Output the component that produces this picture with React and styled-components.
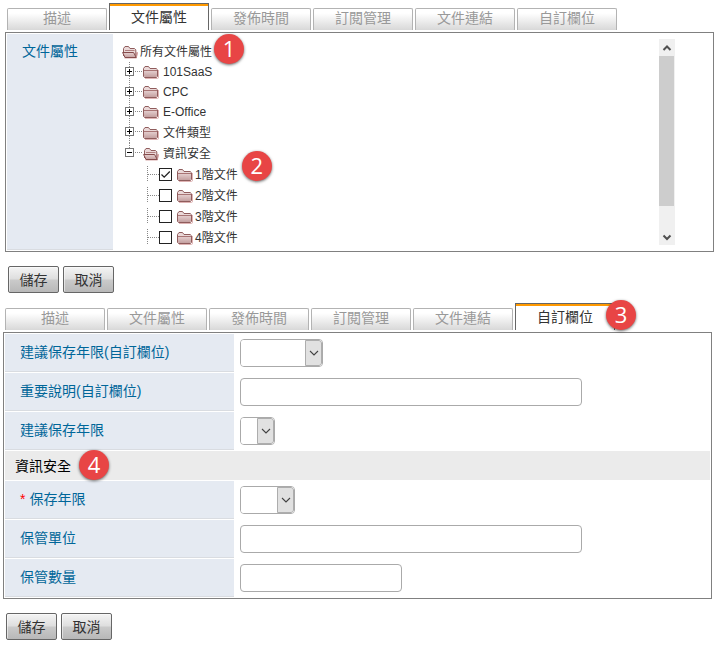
import React from "react";
import styled, { createGlobalStyle, css } from "styled-components";

const GlobalStyle = createGlobalStyle`
  *, *::before, *::after { box-sizing: border-box; }
  body {
    margin: 0;
    background: #fff;
    color: #333;
    font-family: "Liberation Sans", "Noto Sans CJK TC", sans-serif;
    font-size: 14px;
    line-height: 20px;
  }
  button, input, select { font: inherit; color: inherit; }
`;

const Page = styled.main`
  padding: 3px 4px 16px 3px;
`;

const Section = styled.section`
  margin: ${(p) => (p.$inset ? "0 0 10px 2px" : "0 2px 0 0")};
`;

const TabBar = styled.div`
  display: flex;
  align-items: flex-end;
  gap: 2px;
  padding: 0 2px 2px;
`;

const TabButton = styled.button`
  width: 100px;
  height: 22px;
  padding: 0 0 2px;
  border: 1px solid #b3b3b3;
  border-bottom: 0;
  border-radius: 2px 2px 0 0;
  background: linear-gradient(#fff 20%, #d8d8d8);
  color: #999;
  line-height: 19px;
  ${(p) =>
    p.$active &&
    css`
      height: 27px;
      padding: 0;
      border-color: #666;
      border-radius: 0;
      background: #fff;
      box-shadow: inset 0 2px #f90;
      color: #333;
    `}
`;

const TabWrap = styled.div`
  position: relative;
`;

const Panel = styled.div`
  display: grid;
  grid-template-columns: ${(p) => p.$label}px 1fr;
  gap: 1px;
  padding: 1px;
  border: 1px solid #808080;
`;

const LabelCell = styled.div`
  display: flex;
  align-items: ${(p) => (p.$top ? "flex-start" : "center")};
  gap: 4px;
  padding: ${(p) => (p.$top ? "7px 15px" : "0 15px 2px")};
  border-bottom: 1px solid #d9dce1;
  background: #e5eaf2;
  color: #069;
`;

const Required = styled.span`
  color: #f00;
`;

const FieldCell = styled.div`
  display: flex;
  align-items: center;
  height: 38px;
  padding: 0 5px;
`;

const GroupHeading = styled.h2`
  grid-column: 1 / -1;
  display: flex;
  align-items: center;
  position: relative;
  height: 29px;
  margin: 0;
  padding: 0 10px;
  background: #ebebeb;
  color: #000;
  font-size: 14px;
  font-weight: 400;
`;

const TextInput = styled.input`
  width: ${(p) => p.$width}px;
  height: 28px;
  padding: 0 6px;
  border: 1px solid #aaa;
  border-radius: 4px;
  background: #fff;
`;

const SelectFrame = styled.div`
  display: grid;
  grid-template-columns: 1fr 17px;
  width: ${(p) => p.$width}px;
  height: 28px;
  overflow: hidden;
  border: 1px solid #aaa;
  border-radius: 4px;
`;

const SelectControl = styled.select`
  grid-area: 1 / 1 / 2 / 3;
  width: 100%;
  padding: 0 20px 0 4px;
  border: 0;
  appearance: none;
  background: #fff;
`;

const SelectArrow = styled.span`
  grid-area: 1 / 2 / 2 / 3;
  display: grid;
  place-items: center;
  border: 1px solid #adadad;
  border-radius: 0 3px 3px 0;
  background: #e1e1e1;
  pointer-events: none;
`;

const Actions = styled.div`
  display: flex;
  gap: 4px;
  padding: 14px 3px 0;
`;

const ActionButton = styled.button`
  width: 51px;
  height: 27px;
  padding: 0;
  border: 1px solid #666;
  border-radius: 2px;
  background: linear-gradient(#f4f4f4, #dedede 48%, #cacaca 52%, #b8b8b8);
  box-shadow: inset 1px 1px #fff8;
  color: #333;
`;

const TreeCell = styled.div`
  display: flex;
  justify-content: space-between;
  padding: 5px 37px 2px 8px;
`;

const Tree = styled.ul`
  margin: 0;
  padding: 3px 0 0;
  list-style: none;
  font-size: 12px;
`;

const Branch = styled.ul`
  margin: 0;
  padding: 0 0 0 ${(p) => p.$indent}px;
  list-style: none;
`;

const TreeRow = styled.div`
  display: flex;
  align-items: center;
  position: relative;
  height: ${(p) => (p.$tall ? 21 : 20)}px;
  width: max-content;
`;

const RowName = styled.label`
  margin-left: ${(p) => p.$gap}px;
  white-space: nowrap;
`;

const Toggle = styled.button`
  display: flex;
  height: 100%;
  padding: 0;
  border: 0;
  background: none;
`;

const CheckBox = styled.input`
  appearance: none;
  flex: none;
  width: 13px;
  height: 13px;
  margin: 0 5px 0 0;
  border: 1px solid #222;
  background: #fff;
`;

const CheckHolder = styled.span`
  display: grid;
  & > * { grid-area: 1 / 1; }
  & > svg { pointer-events: none; }
`;

const Badge = styled.span`
  position: absolute;
  ${(p) => p.$place}
  z-index: 1;
  display: grid;
  place-items: center;
  width: 30px;
  height: 30px;
  padding-bottom: 2px;
  border-radius: 50%;
  background: #e84545;
  box-shadow: 0 1px 3px #0009;
  color: #fff;
  font-family: "Open Sans", "Noto Sans", sans-serif;
  font-size: 22px;
  line-height: 28px;
`;

const ScrollTrack = styled.div`
  display: flex;
  flex-direction: column;
  align-items: center;
  width: 16px;
  height: 206px;
  background: #f0f0f0;
`;

const ScrollButton = styled.button`
  display: grid;
  place-items: center;
  width: 16px;
  height: 17px;
  padding: 0;
  border: 0;
  background: none;
`;

const ScrollThumb = styled.div`
  align-self: flex-start;
  width: 15px;
  height: 150px;
  margin-bottom: auto;
  background: #cdcdcd;
`;

function Chevron({ up, thick }) {
  return (
    <svg width="10" height="8" viewBox="0 0 10 8" aria-hidden="true">
      <path
        d={up ? "M1.5 6L5 2.5L8.5 6" : thick ? "M1.5 2.5L5 6L8.5 2.5" : "M1 2L5 6L9 2"}
        fill="none"
        stroke={thick ? "#505050" : "#444"}
        strokeWidth={thick ? 2 : 1.1}
      />
    </svg>
  );
}

function Folder({ open }) {
  return (
    <svg width="16" height="16" viewBox="0 0 16 16" aria-hidden="true">
      <defs>
        <linearGradient id="folderFill" x1="0" y1="0" x2="0" y2="1">
          <stop offset="0" stopColor="#e6d0d0" />
          <stop offset="1" stopColor="#c4a0a0" />
        </linearGradient>
      </defs>
      {open ? (
        <>
          <path d="M2.5 13.5H13.8L15.5 8" fill="none" stroke="#d8a8a8" strokeWidth="2" />
          <path d="M1.5 12V4.5L3 2.5H6.5L8 4.5H12.5L13.8 5.8V12.5" fill="#ead8d8" stroke="#8f5c5c" />
          <path d="M3 6.5H12.5" stroke="#b08080" />
          <path d="M0.6 8.5H11.6L14.2 13.5H3Z" fill="url(#folderFill)" stroke="#864c4c" strokeLinejoin="round" />
        </>
      ) : (
        <>
          <path d="M2 14.5H14.5Q15.5 14.5 15.5 13V6" fill="none" stroke="#dfb4b4" />
          <path d="M0.5 12.5V4.5L2 2.5H5.5L7 4.5H13.2L14.5 5.8V12.5L13.5 13.5H1.5Z" fill="#ead8d8" stroke="#8f5c5c" strokeLinejoin="round" />
          <path d="M1 6.5H14V12.3L13.2 13H1.8L1 12.3Z" fill="url(#folderFill)" />
          <path d="M1 6.5H14" stroke="#a87474" />
        </>
      )}
    </svg>
  );
}

function Expander({ open, height }) {
  return (
    <svg width="18" height={height} viewBox={`0 0 18 ${height}`} aria-hidden="true">
      <path d={`M4.5 0V${open ? 5 : height}`} stroke="#888" strokeDasharray="1 1" />
      <path d="M10 9.5H17" stroke="#888" strokeDasharray="1 1" />
      <rect x="0.5" y="5.5" width="8" height="8" fill="#fff" stroke="#777" />
      <path d={open ? "M2 9.5H7" : "M2 9.5H7M4.5 7V12"} stroke="#000" />
    </svg>
  );
}

function LeafLines() {
  return (
    <svg width="12" height="21" viewBox="0 0 12 21" aria-hidden="true">
      <path d="M0.5 2V18" stroke="#888" strokeDasharray="1 1" />
      <path d="M1 10.5H12" stroke="#888" strokeDasharray="1 1" />
    </svg>
  );
}

const TAB_NAMES = ["描述", "文件屬性", "發佈時間", "訂閱管理", "文件連結", "自訂欄位"];

function Tabs({ active, badge }) {
  return (
    <TabBar role="tablist">
      {TAB_NAMES.map((name) => (
        <TabWrap key={name} role="presentation">
          <TabButton type="button" role="tab" aria-selected={name === active} $active={name === active}>
            {name}
          </TabButton>
          {name === active && badge}
        </TabWrap>
      ))}
    </TabBar>
  );
}

function SelectField({ id, width }) {
  return (
    <SelectFrame $width={width}>
      <SelectControl id={id} defaultValue="">
        <option value="" />
      </SelectControl>
      <SelectArrow>
        <Chevron />
      </SelectArrow>
    </SelectFrame>
  );
}

function Field({ id, label, required, select, width }) {
  return (
    <>
      <LabelCell>
        {required && <Required>*</Required>}
        <label htmlFor={id}>{label}</label>
      </LabelCell>
      <FieldCell>
        {select ? <SelectField id={id} width={width} /> : <TextInput id={id} type="text" $width={width} />}
      </FieldCell>
    </>
  );
}

function SaveCancel() {
  return (
    <Actions>
      <ActionButton type="button">儲存</ActionButton>
      <ActionButton type="button">取消</ActionButton>
    </Actions>
  );
}

const GROUPS = [
  { name: "101SaaS" },
  { name: "CPC" },
  { name: "E-Office" },
  { name: "文件類型", tall: true },
  { name: "資訊安全", tall: true, open: true },
];

const LEVELS = ["1階文件", "2階文件", "3階文件", "4階文件"];

function Leaf({ name, index }) {
  const [checked, setChecked] = React.useState(index === 0);
  const id = `level-${index}`;
  return (
    <li>
      <TreeRow $tall>
        <LeafLines />
        <CheckHolder>
          <CheckBox id={id} type="checkbox" checked={checked} onChange={() => setChecked(!checked)} />
          {checked && (
            <svg width="13" height="13" viewBox="0 0 13 13" aria-hidden="true">
              <path d="M2.5 6.5L5.2 9.2L10.8 3.5" fill="none" stroke="#222" strokeWidth="1.3" />
            </svg>
          )}
        </CheckHolder>
        <Folder />
        <RowName htmlFor={id} $gap={2}>{name}</RowName>
        {index === 0 && <Badge $place="left: calc(100% + 4px); top: -13px;">2</Badge>}
      </TreeRow>
    </li>
  );
}

function AttributeTree() {
  return (
    <Tree>
      <li>
        <TreeRow>
          <Folder open />
          <RowName as="span" $gap={2}>所有文件屬性</RowName>
          <Badge $place="left: calc(100% + 2px); top: -8px;">1</Badge>
        </TreeRow>
        <Branch $indent={3}>
          {GROUPS.map((group) => (
            <li key={group.name}>
              <TreeRow $tall={group.tall}>
                <Toggle type="button" aria-label={group.name} aria-expanded={!!group.open}>
                  <Expander open={group.open} height={group.tall ? 21 : 20} />
                </Toggle>
                <Folder open={group.open} />
                <RowName as="span" $gap={4}>{group.name}</RowName>
              </TreeRow>
              {group.open && (
                <Branch $indent={22}>
                  {LEVELS.map((name, index) => (
                    <Leaf key={name} name={name} index={index} />
                  ))}
                </Branch>
              )}
            </li>
          ))}
        </Branch>
      </li>
    </Tree>
  );
}

export default function App() {
  return (
    <Page>
      <GlobalStyle />
      <Section $inset>
        <Tabs active="文件屬性" />
        <Panel $label={106}>
          <LabelCell $top>文件屬性</LabelCell>
          <TreeCell>
            <AttributeTree />
            <ScrollTrack>
              <ScrollButton type="button" aria-label="向上捲動"><Chevron up thick /></ScrollButton>
              <ScrollThumb />
              <ScrollButton type="button" aria-label="向下捲動"><Chevron thick /></ScrollButton>
            </ScrollTrack>
          </TreeCell>
        </Panel>
        <SaveCancel />
      </Section>
      <Section>
        <Tabs active="自訂欄位" badge={<Badge $place="left: 91px; top: -3px;">3</Badge>} />
        <Panel $label={229}>
          <Field id="keep-years-custom" label="建議保存年限(自訂欄位)" select width={83} />
          <Field id="notes-custom" label="重要說明(自訂欄位)" width={342} />
          <Field id="keep-years-suggested" label="建議保存年限" select width={35} />
          <GroupHeading>
            資訊安全
            <Badge $place="left: 74px; top: -1px;">4</Badge>
          </GroupHeading>
          <Field id="keep-years" label="保存年限" required select width={55} />
          <Field id="keeper-unit" label="保管單位" width={342} />
          <Field id="keeper-count" label="保管數量" width={162} />
        </Panel>
        <SaveCancel />
      </Section>
    </Page>
  );
}
